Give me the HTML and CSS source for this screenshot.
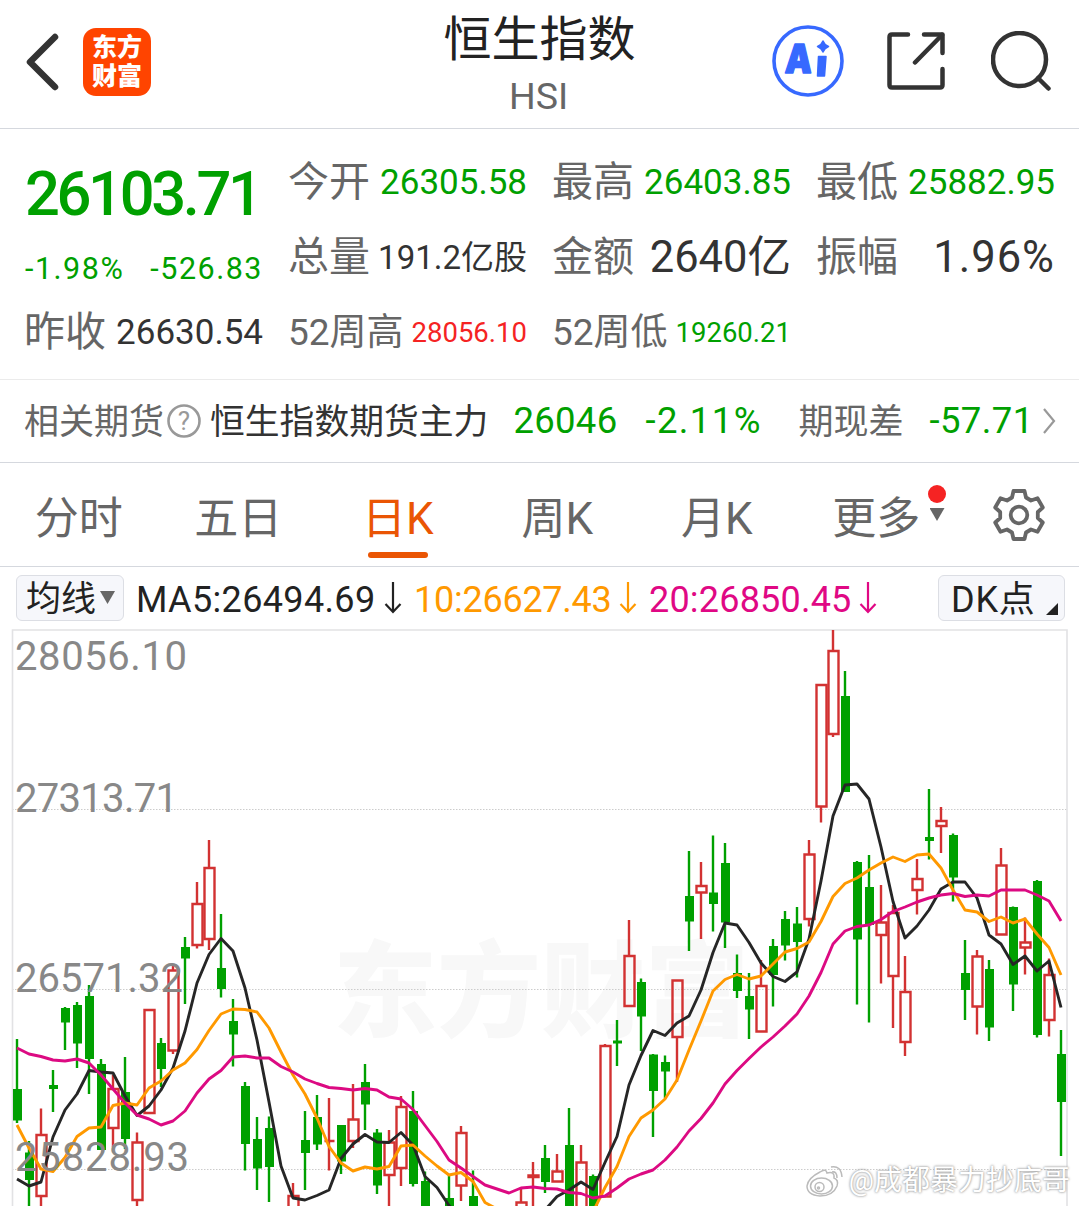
FILE: index.html
```html
<!DOCTYPE html>
<html lang="zh-CN">
<head>
  <meta charset="UTF-8">
  <meta name="viewport" content="width=device-width, initial-scale=1.0">
  <title>恒生指数 HSI</title>
  <link rel="stylesheet" href="styles.css">
</head>
<body>

  <header class="header">
    <div class="header-left">
      <svg class="back" width="34" height="58" viewBox="0 0 34 58">
        <path d="M29 4 L4 29 L29 54" />
      </svg>
      <div class="logo"><span>东方</span><span>财富</span></div>
    </div>
    <div class="header-title">
      <h1>恒生指数</h1>
      <p>HSI</p>
    </div>
    <div class="header-right">
      <svg class="icon-ai" width="72" height="72" viewBox="0 0 72 72">
        <circle cx="36" cy="36" r="34" />
        <text x="15" y="48" textLength="27" lengthAdjust="spacingAndGlyphs" transform="skewX(-3)">A</text>
        <path class="ai-stem" d="M46.5 31.500 H54 L52.500 51 H45.500 Z" />
        <path class="ai-star" d="M51 16 Q52.500 20 56.500 21.500 Q52.500 23 51 27 Q49.500 23 45.500 21.500 Q49.500 20 51 16 Z" />
      </svg>
      <svg class="icon-share" width="58" height="58" viewBox="0 0 58 58">
        <path d="M21 2.500 H5 Q2.500 2.500 2.500 5 V53 Q2.500 55.500 5 55.500 H53 Q55.500 55.500 55.500 53 V37" />
        <path d="M37 2.500 H55.500 V21" />
        <path d="M55 3 L28 30.500" />
      </svg>
      <svg class="icon-search" width="60" height="60" viewBox="0 0 60 60">
        <circle cx="28.500" cy="28.500" r="26.500" />
        <path d="M47 47 L57.500 57.500" />
      </svg>
    </div>
  </header>

  <section class="quote">
    <div class="price">26103.71</div>
    <div class="item"><span class="label">今开</span><span class="value green">26305.58</span></div>
    <div class="item"><span class="label">最高</span><span class="value green">26403.85</span></div>
    <div class="item"><span class="label">最低</span><span class="value green">25882.95</span></div>

    <div class="change green"><span>-1.98%</span><span>-526.83</span></div>
    <div class="item"><span class="label">总量</span><span class="value volume">191.2亿股</span></div>
    <div class="item"><span class="label">金额</span><span class="value large">2640亿</span></div>
    <div class="item"><span class="label">振幅</span><span class="value large wide">1.96%</span></div>

    <div class="item"><span class="label">昨收</span><span class="value">26630.54</span></div>
    <div class="item"><span class="label week">52周高</span><span class="value small red">28056.10</span></div>
    <div class="item"><span class="label week">52周低</span><span class="value small green">19260.21</span></div>
  </section>

  <section class="futures">
    <span class="f-label">相关期货</span>
    <svg class="help" width="34" height="34" viewBox="0 0 34 34">
      <circle cx="17" cy="17" r="15.500" />
      <text x="17" y="26">?</text>
    </svg>
    <span class="f-name">恒生指数期货主力</span>
    <span class="f-price green">26046</span>
    <span class="f-rate green">-2.11%</span>
    <span class="f-label f-diff">期现差</span>
    <span class="f-basis green">-57.71</span>
    <svg class="more" width="14" height="28" viewBox="0 0 14 28">
      <path d="M2 2 L12 14 L2 26" />
    </svg>
  </section>

  <nav class="tabs">
    <a class="tab">分时</a>
    <a class="tab">五日</a>
    <a class="tab active">日K</a>
    <a class="tab">周K</a>
    <a class="tab">月K</a>
    <a class="tab">更多<i class="dot"></i><i class="arrow"></i></a>
    <svg class="gear" width="54" height="54" viewBox="-27 -27 54 54">
      <path d="M-5.500 -24 H5.500 L7 -17.500 L12 -14.500 L18.500 -16.800 L23.800 -7.500 L18.800 -3 V3 L23.800 7.500 L18.500 16.800 L12 14.500 L7 17.500 L5.500 24 H-5.500 L-7 17.500 L-12 14.500 L-18.500 16.800 L-23.800 7.500 L-18.800 3 V-3 L-23.800 -7.500 L-18.500 -16.800 L-12 -14.500 L-7 -17.500 Z" />
      <circle r="8.300" />
    </svg>
  </nav>

  <section class="ma-bar">
    <button class="ma-select">均线<i class="arrow"></i></button>
    <span class="ma ma5">MA5:26494.69</span>
    <svg class="down ma5" width="18" height="32" viewBox="0 0 18 32"><path d="M9 0 V30 M1.500 22 L9 30 L16.500 22" /></svg>
    <span class="ma ma10">10:26627.43</span>
    <svg class="down ma10" width="18" height="32" viewBox="0 0 18 32"><path d="M9 0 V30 M1.500 22 L9 30 L16.500 22" /></svg>
    <span class="ma ma20">20:26850.45</span>
    <svg class="down ma20" width="18" height="32" viewBox="0 0 18 32"><path d="M9 0 V30 M1.500 22 L9 30 L16.500 22" /></svg>
    <button class="dk">DK点<i class="corner"></i></button>
  </section>

  <section class="chart">
    <svg id="kline" width="1079" height="577" viewBox="0 629 1079 577">
      <text class="brand" x="333" y="1029" textLength="416">东方财富</text>
      <path class="grid" d="M12 809.500 H1067 M12 989.500 H1067 M12 1169.500 H1067" />
      <path class="frame" d="M12.500 1206 V630 H1067 V1206" />
      <g id="candles"></g>
      <polyline id="line5" class="line line5" />
      <polyline id="line10" class="line line10" />
      <polyline id="line20" class="line line20" />
      <g class="axis">
        <text x="15" y="670" textLength="172">28056.10</text>
        <text x="15" y="812" textLength="163">27313.71</text>
        <text x="15" y="992" textLength="168">26571.32</text>
        <text x="15" y="1171" textLength="174">25828.93</text>
      </g>
    </svg>
    <div class="weibo">
      <svg width="40" height="34" viewBox="0 0 40 34">
        <path d="M15 8 Q21 4 22 9 Q30 7 29 14 Q34 16 32 22 Q28 32 15 32 Q2 31 2 22 Q3 14 15 8 Z" />
        <ellipse cx="16.500" cy="22" rx="11" ry="8" />
        <circle cx="14.500" cy="23" r="4.500" />
        <circle cx="13.500" cy="24" r="1" />
        <path d="M26 3 Q36 1 37 13 M27 8 Q32 7 32 14" />
      </svg>
      <span>@成都暴力抄底哥</span>
    </div>
  </section>

<script src="chart.js"></script>
</body>
</html>
```
FILE: styles.css
```css
* {
  box-sizing: border-box;
}
body {
  margin: 0;
  width: 1079px;
  height: 1206px;
  overflow: hidden;
  background-color: #fff;
  color: #333;
  font-family: Roboto, "Noto Sans CJK SC", sans-serif;
  line-height: 1;
}
h1, p {
  margin: 0;
  font-weight: 400;
}
svg {
  display: block;
  flex: none;
  fill: none;
}
.green {
  color: #00a000;
}
.red {
  color: #f52323;
}

/* header */
.header {
  display: grid;
  grid-template-columns: 1fr 240px 1fr;
  height: 129px;
  border-bottom: 1px solid #d5d8de;
}
.header-left {
  display: flex;
  align-items: center;
  height: 124px;
  padding-left: 26px;
}
.back {
  stroke: #333;
  stroke-width: 6.5;
  stroke-linecap: round;
  stroke-linejoin: round;
}
.logo {
  display: flex;
  flex-direction: column;
  align-items: center;
  justify-content: center;
  gap: 4px;
  width: 68px;
  height: 68px;
  margin-left: 23px;
  border-radius: 13px;
  background-color: #ff4400;
  color: #fff;
  font-size: 25px;
  font-weight: 900;
}
.header-title {
  text-align: center;
  padding-top: 16px;
}
.header-title h1 {
  font-size: 48px;
  color: #222;
}
.header-title p {
  margin-top: 14px;
  padding-right: 2px;
  font-size: 37.5px;
  color: #666;
}
.header-right {
  display: flex;
  align-items: center;
  justify-content: flex-end;
  height: 122px;
  padding-right: 28px;
}
.header-right svg {
  stroke: #333;
  stroke-width: 4.5;
  stroke-linecap: round;
  stroke-linejoin: round;
}
.header-right .icon-ai {
  stroke: #3769ff;
  stroke-width: 3.6;
}
.icon-ai text {
  font: 900 40px Inter, sans-serif;
  fill: #3769ff;
  stroke-width: 1.5;
}
.header-right .ai-stem, .header-right .ai-star {
  fill: #3769ff;
  stroke-width: 1.5;
}
.icon-share {
  margin-left: 43px;
}
.icon-search {
  margin-left: 46px;
}

/* quote */
.quote {
  display: grid;
  grid-template-columns: repeat(4, 238px);
  grid-template-rows: repeat(3, 75px);
  column-gap: 26px;
  height: 251px;
  padding: 16px 26px 0 25px;
  border-bottom: 1px solid #ebebeb;
}
.item {
  display: flex;
  align-items: center;
  justify-content: space-between;
  white-space: nowrap;
}
.label {
  margin-left: -1px;
  font-size: 41px;
  color: #666;
}
.label.week {
  font-size: 37px;
}
.value {
  font-size: 35px;
}
.value.volume {
  font-size: 33px;
}
.value.large {
  font-size: 43.5px;
}
.value.wide {
  letter-spacing: 1px;
}
.value.small {
  font-size: 27.5px;
}
.price {
  padding-top: 19px;
  font-size: 61.5px;
  font-weight: 500;
  letter-spacing: -3.4px;
  color: #00a000;
}
.change {
  display: flex;
  align-items: center;
  justify-content: space-between;
  padding-top: 23px;
  font-size: 30.5px;
  letter-spacing: 1.5px;
}

/* futures */
.futures {
  display: flex;
  align-items: center;
  height: 83px;
  padding-left: 24px;
  border-bottom: 1px solid #d5d8de;
  font-size: 36.5px;
  white-space: nowrap;
}
.f-label {
  padding-top: 2px;
  font-size: 35px;
  color: #666;
}
.f-name {
  margin-left: 9px;
  padding-top: 2px;
  font-size: 34.8px;
}
.help {
  margin-left: 3px;
  stroke: #999;
  stroke-width: 2.6;
}
.help text {
  font-size: 26px;
  text-anchor: middle;
  fill: #999;
  stroke: none;
}
.f-price {
  width: 132px;
  margin-left: 25px;
  letter-spacing: 0.3px;
}
.f-rate {
  width: 153px;
  letter-spacing: 1.4px;
}
.f-basis {
  width: 106px;
  margin-left: 26px;
  letter-spacing: 0.4px;
}
.more {
  margin-left: 7px;
  stroke: #999;
  stroke-width: 2.2;
}

/* tabs */
.tabs {
  display: flex;
  align-items: center;
  height: 104px;
  border-bottom: 1px solid #d5d8de;
}
.tab {
  position: relative;
  display: flex;
  align-items: center;
  justify-content: center;
  width: 159.5px;
  height: 100%;
  padding: 8px 2px 0 0;
  font-size: 44px;
  color: #666;
}
.tab.active {
  color: #ea5504;
}
.tab.active::after {
  content: "";
  position: absolute;
  left: 49px;
  bottom: 8px;
  width: 60px;
  height: 6px;
  border-radius: 3px;
  background-color: #ea5504;
}
.dot {
  position: absolute;
  left: 130px;
  top: 22px;
  width: 18px;
  height: 18px;
  border-radius: 50%;
  background-color: #f52323;
}
.arrow {
  width: 15px;
  height: 13px;
  background-color: #666;
  clip-path: polygon(0 0, 100% 0, 50% 100%);
}
.tab .arrow {
  position: absolute;
  left: 132px;
  top: 45px;
}
.gear {
  margin-left: 35px;
  stroke: #666;
  stroke-width: 3.8;
  stroke-linejoin: round;
}

/* moving averages */
.ma-bar {
  display: flex;
  align-items: center;
  height: 62px;
  padding: 0 14px 0 16px;
  white-space: nowrap;
}
.ma-bar button {
  display: flex;
  align-items: center;
  height: 46px;
  padding: 3px 0 0 9px;
  border: 1px solid #dcdee4;
  border-radius: 6px;
  background-color: #f6f7fb;
  color: #222;
  font-family: inherit;
  font-size: 35px;
  line-height: 1;
}
.ma-bar .ma-select {
  width: 108px;
}
.ma-select .arrow {
  margin: 0 0 4px 4px;
}
.ma {
  font-size: 36px;
  padding-top: 3px;
}
.ma5 {
  color: #222;
}
.ma10 {
  color: #ff9900;
}
.ma20 {
  color: #e00884;
}
.ma.ma5 {
  width: 248px;
  margin-left: 12px;
  letter-spacing: 0.35px;
}
.ma.ma10 {
  width: 205px;
  margin-left: 12px;
  letter-spacing: -0.25px;
}
.ma.ma20 {
  width: 210px;
  margin-left: 12px;
  letter-spacing: 0.2px;
}
.down {
  stroke: currentColor;
  stroke-width: 2.2;
}
.ma-bar .dk {
  position: relative;
  width: 127px;
  margin-left: auto;
  padding-left: 12px;
  font-size: 36px;
  letter-spacing: 0.8px;
}
.corner {
  position: absolute;
  right: 6px;
  bottom: 5px;
  width: 12px;
  height: 12px;
  background-color: #222;
  clip-path: polygon(100% 0, 100% 100%, 0 100%);
}

/* chart */
.chart {
  position: relative;
}
.brand {
  font-size: 104px;
  font-weight: 900;
  fill: #f8f8f8;
}
.grid {
  stroke: #ccc;
  stroke-dasharray: 1.5 1.5;
}
.frame {
  stroke: #e2e2e4;
  stroke-width: 1.6;
}
.up {
  stroke: #d23232;
  stroke-width: 2.4;
}
.fall {
  fill: #00a000;
  stroke: none;
}
.line {
  stroke-width: 2.9;
  stroke-linejoin: round;
}
.line5 {
  stroke: #262626;
}
.line10 {
  stroke: #ff9900;
}
.line20 {
  stroke: #dc0a82;
}
.axis {
  font-size: 40px;
  fill: #888;
}
.weibo {
  position: absolute;
  right: 9px;
  bottom: 8px;
  display: flex;
  align-items: center;
  gap: 4px;
  color: #fff;
  font-size: 28px;
  text-shadow: 0 0 2px #999, 0 0 3px #aaa;
}
.weibo svg {
  stroke: #bbb;
  stroke-width: 1.5;
}
```
FILE: chart.js
```js
// type, high, body top, body bottom, low
const candles = [
  ['g', 1039, 1089, 1120.5, 1123], ['g', 1141, 1152.5, 1180, 1210], ['r', 1108.5, 1135, 1196, 1210],
  ['g', 1070, 1085, 1089, 1112], ['g', 1007, 1008, 1022.5, 1050], ['g', 1002, 1005, 1043.5, 1068],
  ['g', 985, 996, 1059, 1094], ['g', 1059, 1064, 1150, 1150], ['r', 1075, 1089, 1128, 1147],
  ['g', 1057, 1092, 1139, 1149], ['r', 1132.5, 1142.5, 1200, 1210], ['r', 1009.5, 1010, 1113, 1113],
  ['g', 1038, 1043, 1069, 1087], ['r', 966, 970.5, 1050.5, 1054], ['g', 937, 947, 958.5, 1004],
  ['r', 882, 904, 945, 948.5], ['r', 840, 868, 939, 950], ['g', 914, 968, 989, 997.5],
  ['g', 999, 1021, 1034.5, 1066.5], ['g', 1082, 1086, 1144, 1170.5], ['g', 1117, 1139, 1168.5, 1190],
  ['g', 1116.5, 1128, 1167, 1202], null, ['r', 1183, 1196, 1220, 1220],
  ['g', 1111, 1140, 1153, 1190], ['g', 1095, 1117, 1144.5, 1150], ['r', 1098, 1141, 1141, 1170.5],
  ['g', 1125, 1125, 1161.5, 1174], ['r', 1084, 1119.5, 1141, 1148], ['g', 1064, 1082, 1104.5, 1130],
  ['g', 1129, 1132.5, 1185.5, 1194], ['r', 1130, 1142.5, 1175, 1210], ['r', 1096, 1107, 1168, 1186],
  ['g', 1091, 1111, 1184, 1186.5], ['g', 1171.5, 1181, 1210, 1210], null,
  ['g', 1175, 1198, 1210, 1210], ['r', 1126, 1133, 1185.5, 1201], ['g', 1170.5, 1196, 1210, 1210],
  null, null, null,
  ['r', 1187, 1202.5, 1220, 1220], ['r', 1162, 1175.5, 1177, 1210], ['g', 1145, 1158, 1182, 1193],
  ['r', 1154, 1171.5, 1181.5, 1182], ['g', 1108, 1145, 1210, 1210], ['r', 1145, 1162.5, 1220, 1220],
  ['g', 1174.5, 1176, 1210, 1210], ['r', 1044, 1046, 1196.5, 1197], ['g', 1020, 1040.5, 1043.5, 1066],
  ['r', 920, 956, 1006, 1007], ['g', 978.5, 982, 1016.5, 1051], ['g', 1054, 1054.5, 1091, 1137],
  ['g', 1055.5, 1062, 1071.5, 1098], ['r', 980, 980.5, 1037, 1082], ['g', 851, 896, 921.5, 951],
  ['r', 862, 886, 892.5, 939], ['g', 835.5, 892.5, 904, 931.5], ['g', 843, 863, 922.5, 948],
  ['g', 954.5, 973, 991, 998], ['g', 973, 996, 1009.5, 1039], ['r', 960, 986, 1031.5, 1032],
  ['g', 939, 946, 975, 1006.5], ['g', 911, 919, 945.5, 960.5], ['g', 907, 923.5, 942, 977.5],
  ['r', 840, 854.5, 919, 926.5], ['r', 685, 685, 806.5, 822.5], ['r', 630, 651, 734, 737],
  ['g', 671, 696, 792, 792], ['g', 861, 862, 939.5, 1004.5], ['g', 855, 887, 925, 1022.5],
  ['r', 885, 922.5, 935, 983.5], ['r', 905, 913, 976, 1028], ['r', 956, 992, 1042, 1056],
  ['r', 859, 879, 890, 914.5], ['g', 789, 837, 841, 859.5], ['r', 807, 821, 826, 853],
  ['g', 833.5, 835, 877.5, 901.5], ['g', 940, 973, 990, 1020], ['r', 950, 956.5, 1006.5, 1034.5],
  ['g', 960, 969, 1027.5, 1041], ['r', 848, 865.5, 934.5, 935], ['g', 906.5, 907, 984.5, 1011],
  ['r', 917.5, 942.5, 947.5, 974.5], ['g', 880, 881, 1035, 1037.5], ['r', 958.5, 975, 1020, 1036.5],
  ['g', 1030, 1054, 1102, 1156]
];

const ma5 = [
  1179, 1186, 1182, 1137, 1110, 1094, 1070.5, 1072, 1073, 1096, 1115.5, 1106, 1090, 1068, 1031, 983,
  954.5, 938.5, 951, 988, 1040, 1102, 1166, 1198, 1200, 1195.5, 1190, 1158.5, 1144, 1134.5, 1142,
  1142.5, 1132.5, 1145, 1176.5, 1187.5, 1205.5, 1218, 1228, 1235, 1235, 1230, 1225, 1219, 1210,
  1196.5, 1190, 1182, 1189.5, 1162.5, 1136.5, 1085, 1055.5, 1030.5, 1035.5, 1023, 1016, 990, 952.5,
  923, 925, 942.5, 963, 976.5, 981.5, 972, 939, 881, 816, 785, 784, 799, 847, 901.5, 938, 926, 910,
  889, 882, 882, 898, 935, 944, 964.5, 956, 971, 961, 1007.5
];

const ma10 = [
  1125, 1148, 1169, 1171.5, 1157.5, 1136.5, 1128, 1127, 1105.5, 1103, 1105, 1088, 1081, 1070, 1063,
  1049.5, 1030.5, 1014, 1009, 1009.5, 1012, 1028, 1052, 1075, 1094, 1118, 1146.5, 1163, 1171, 1167,
  1169, 1166.5, 1146, 1145, 1156, 1166, 1175, 1172.5, 1181.5, 1202.5, 1209, 1215, 1222, 1228, 1230,
  1230, 1227, 1222, 1212, 1187.5, 1166.5, 1136.5, 1118, 1110, 1099, 1080, 1050, 1021, 991, 979.5,
  974.5, 979, 976, 964, 952, 948.5, 942, 921.5, 896.5, 883.5, 878, 870, 863, 857, 861.5, 855, 854,
  868, 890, 910, 912, 921.5, 917, 923, 919, 934, 947.5, 975
];

const ma20 = [
  1048, 1054, 1056.5, 1060, 1061, 1059, 1063, 1075, 1089, 1103, 1115, 1119, 1125, 1121, 1111, 1093,
  1079, 1070.5, 1057, 1056, 1058, 1058, 1066.5, 1072, 1079, 1083.5, 1087.5, 1088.5, 1090, 1088.5,
  1090, 1097, 1099, 1109.5, 1125.5, 1141.5, 1160, 1168, 1176.5, 1185, 1189, 1193, 1188, 1187, 1188.5,
  1189, 1192.5, 1193.5, 1198, 1196, 1188, 1179, 1174, 1170, 1160, 1147, 1131, 1118.5, 1103, 1084,
  1070.5, 1058.5, 1047, 1037, 1026, 1014, 996, 972.5, 944, 931, 926.5, 925, 919.5, 911.5, 907, 902,
  898, 895, 893.5, 896.5, 895, 896, 890, 890, 890, 895, 901, 921
];

const xOf = (i) => 17 + i * 12;

let shapes = '';
candles.forEach((c, i) => {
  if (!c) return;
  const [type, high, top, bottom, low] = c;
  const x = xOf(i);
  if (type === 'g') {
    shapes += `<path class="fall" d="M${x - 1.2} ${high}h2.4V${low}h-2.4Z M${x - 4} ${top}h9V${bottom}h-9Z"/>`;
  } else {
    shapes += `<path class="up" d="M${x} ${high}V${top} M${x} ${bottom}V${low} M${x - 4.5} ${top}h10V${bottom}h-10Z"/>`;
  }
});
document.getElementById('candles').innerHTML = shapes;

function drawLine(id, values) {
  const points = values.map((y, i) => xOf(i) + ',' + y).join(' ');
  document.getElementById(id).setAttribute('points', points);
}

drawLine('line5', ma5);
drawLine('line10', ma10);
drawLine('line20', ma20);
```
